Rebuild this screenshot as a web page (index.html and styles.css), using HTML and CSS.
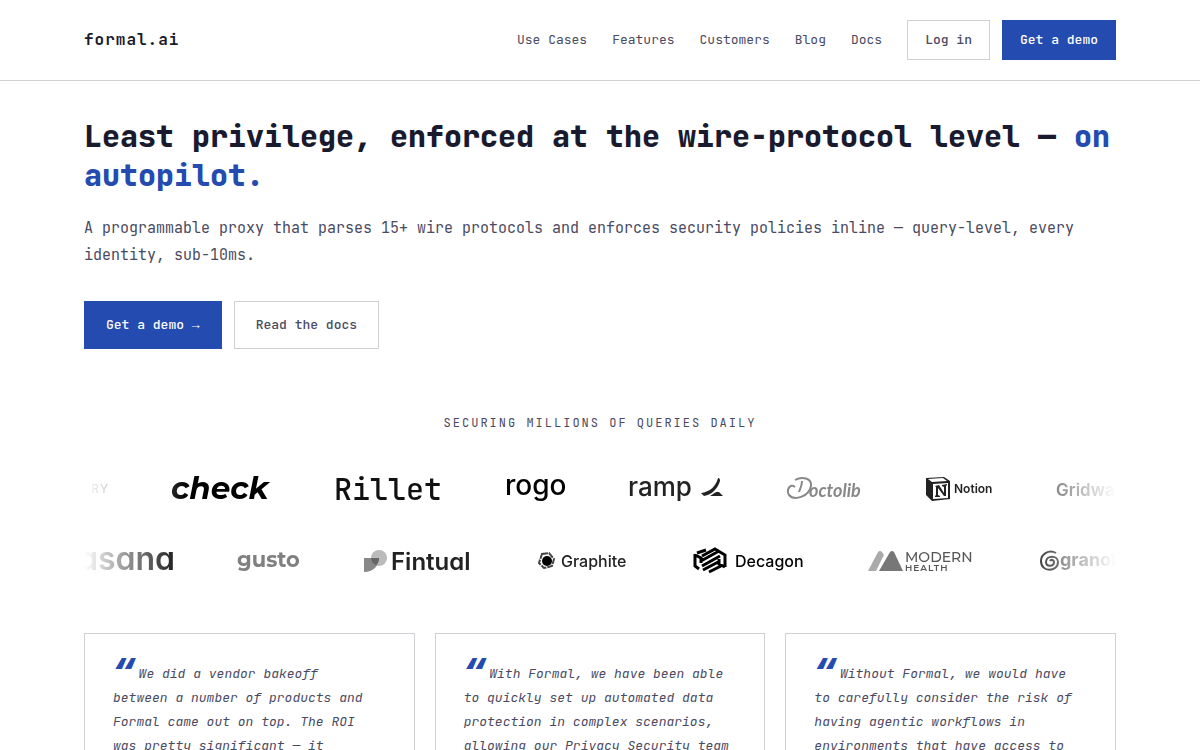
FILE: index.html
```html
<!DOCTYPE html>
<html lang="en">
<head>
<meta charset="utf-8">
<meta name="viewport" content="width=device-width, initial-scale=1">
<title>formal.ai</title>
<link rel="stylesheet" href="styles.css">
</head>
<body>
<header class="site-header">
  <div class="container header-inner">
    <a class="brand" href="#">formal.ai</a>
    <nav class="nav">
      <a href="#">Use Cases</a>
      <a href="#">Features</a>
      <a href="#">Customers</a>
      <a href="#">Blog</a>
      <a href="#">Docs</a>
      <div class="nav-actions">
        <a class="btn" href="#">Log in</a>
        <a class="btn btn-primary" href="#">Get a demo</a>
      </div>
    </nav>
  </div>
</header>
<main class="container">
  <section class="hero">
    <h1>Least privilege, enforced at the wire-protocol level — <span class="accent">on autopilot.</span></h1>
    <p>A programmable proxy that parses 15+ wire protocols and enforces security policies inline — query-level, every identity, sub-10ms.</p>
    <div class="hero-actions">
      <a class="btn btn-large btn-primary" href="#">Get a demo <span class="arrow">→</span></a>
      <a class="btn btn-large" href="#">Read the docs</a>
    </div>
  </section>

  <section class="customers">
    <h2>SECURING MILLIONS OF QUERIES DAILY</h2>
    <div class="logo-row">
      <svg width="24" height="32" fill="#333"><text class="tracked" x="25" y="20" text-anchor="end" font-size="12" font-weight="500">RY</text></svg>
      <svg width="99" height="32"><text class="geo" x="-1" y="26" font-size="31" font-weight="700" font-style="italic">check</text></svg>
      <svg width="107" height="32" fill="#111"><text class="mono" x="-1" y="27" font-size="30" font-weight="500">Rillet</text></svg>
      <svg width="60" height="32"><text x="-1" y="22" font-size="28" font-weight="500">rogo</text></svg>
      <svg width="93" height="32" fill="#222"><text x="-2" y="23" font-size="26" font-weight="500">ramp</text><path d="M88 5c2 0 2 2 2 3-2 7-8 14-16 15l-3-3c9-1 15-7 17-15zM80 23l6-4h3l4 4z"/></svg>
      <svg width="75" height="32" fill="#888"><path d="M8 14C3 10-1 17 2 22c5 6 20 2 22-9C25 5 15 3 8 7" fill="none" stroke="#888" stroke-width="2"/><path d="M15 8c0 5-2 8-3 11" stroke="#888" stroke-width="2" fill="none"/><text class="script" x="22" y="24" font-size="18" font-style="italic" font-weight="700">octolib</text></svg>
      <svg width="67" height="32" fill="#222"><path d="M0 5l18-1 6 4v18l-18 2-6-6z"/><path d="M2 6l15-1 4 3-15 1zM7 11l15-1v15L7 26z" fill="#fff"/><path d="M9 13l4-1 5 8v-6l-2-1v-1l5-1v1l-1 1v10h-2l-6-8v7l2 1v1H9v-1l1-1v-8l-1-1z"/><text x="28" y="20" font-size="12" font-weight="600">Notion</text></svg>
      <svg width="76" height="32" fill="#333"><text x="-1" y="23" font-size="17" font-weight="600">Gridware</text></svg>
    </div>
    <div class="logo-row">
      <svg width="90" height="32" fill="#000"><text class="round" x="91" y="25" text-anchor="end" font-size="32" font-weight="600">asana</text></svg>
      <svg width="62" height="32" fill="#808080"><text class="geo" x="-1" y="22" font-size="21" font-weight="700">gusto</text></svg>
      <svg width="109" height="32" fill="#222"><circle cx="15" cy="13" r="8" fill="#bbb"/><path d="M0 13h15c0 8-6 14-15 14z" fill="#888"/><path d="M7 13h8c0 3-1 5-3 7-3-1-5-4-5-7z" fill="#666"/><text class="round" x="27" y="25" font-size="24" font-weight="600">Fintual</text></svg>
      <svg width="92" height="32" fill="#222"><path d="M5 9l7-1 5 6-2 7-8 2-5-5z" fill="none" stroke="#444" stroke-width="2" stroke-dasharray="6 1"/><circle cx="10" cy="16" r="5" fill="#000"/><text x="24" y="22" font-size="16" font-weight="500">Graphite</text></svg>
      <svg width="111" height="32" fill="none" stroke="#000" stroke-width="3"><path d="M2 9v12l4 3M2 10l6 3v5M32 22V10l-5-3M32 22l-6-3v-5M4 8l9-3M9 11l13-7 5 3M8 16l18-10M9 21l18-10M10 25l17-9M16 27l12-6"/><text x="42" y="22" fill="#000" stroke="none" font-size="16" font-weight="500">Decagon</text></svg>
      <svg width="108" height="32" fill="#555"><path d="M0 26L10 7q2-2 4 0l2 3-8 16z" fill="#aaa"/><path d="M11 26L22 7q2-2 4 0l9 19z" fill="#777"/><text class="geo" x="37" y="17" font-size="14" font-weight="500">MODERN</text><text class="geo tracked" x="37" y="26" font-size="9" font-weight="600">HEALTH</text></svg>
      <svg width="84" height="32" fill="#333"><path d="M16 8C9 4 1 9 1 16c0 12 17 11 17 1 0-7-12-7-12 0 0 5 8 5 8 0 0-2-3-3-4-1" fill="none" stroke="#000" stroke-width="2"/><text x="20" y="21" font-size="18" font-weight="700">granola</text></svg>
    </div>
  </section>

  <section class="quotes">
    <blockquote class="quote"><span class="mark">“</span>We did a vendor bakeoff<br>between a number of products and Formal came out on top. The ROI<br>was pretty significant — it</blockquote>
    <blockquote class="quote"><span class="mark">“</span>With Formal, we have been able to quickly set up automated data protection in complex scenarios, allowing our Privacy Security team</blockquote>
    <blockquote class="quote"><span class="mark">“</span>Without Formal, we would have to carefully consider the risk of having agentic workflows in environments that have access to</blockquote>
  </section>
</main>
</body>
</html>
```
FILE: styles.css
```css
:root {
  --blue: #244bb0;
  --ink: #1a1a2e;
  --text: #4a4a62;
  --line: #d0d0d4;
  --mono: "JetBrains Mono", "DejaVu Sans Mono", "Liberation Mono", monospace;
}
* { box-sizing: border-box; }
html { overflow: hidden; }
body {
  margin: 0;
  background: #fff;
  color: var(--text);
  font-family: var(--mono);
  font-size: 13px;
  line-height: 20px;
}
a { color: inherit; text-decoration: none; }
.container { max-width: 1080px; margin: 0 auto; padding: 0 24px; }

.site-header { border-bottom: 1px solid var(--line); }
.header-inner {
  display: flex;
  align-items: center;
  justify-content: space-between;
  min-height: 80px;
}
.brand { color: var(--ink); font-size: 16px; font-weight: 700; letter-spacing: 1px; }
.nav { display: flex; align-items: center; gap: 25px; }
.nav-actions { display: flex; gap: 12px; }

.btn {
  display: inline-block;
  padding: 9px 17px;
  border: 1px solid var(--line);
  font-weight: 500;
}
.btn-primary { background: var(--blue); border-color: var(--blue); color: #fff; }
.btn-large { padding: 13px 21px; }
.arrow { font-family: "Liberation Mono", monospace; line-height: 1; }

.hero { padding-top: 36px; }
h1 { margin: 0 0 20px; color: var(--ink); font-size: 30px; line-height: 39px; font-weight: 800; }
.accent { color: var(--blue); }
.hero p { margin: 0 0 32px; font-size: 15px; line-height: 27px; }
.hero-actions { display: flex; gap: 12px; }

.customers { padding-top: 64px; }
h2 {
  margin: 0 0 40px;
  font-size: 12px;
  line-height: 20px;
  font-weight: 400;
  letter-spacing: 2px;
  text-align: center;
}
.logo-row {
  display: flex;
  gap: 64px;
  margin-bottom: 40px;
  overflow: hidden;
  font-family: Inter, sans-serif;
  -webkit-mask-image: linear-gradient(to right, transparent, #000 10%, #000 90%, transparent);
  mask-image: linear-gradient(to right, transparent, #000 10%, #000 90%, transparent);
}
.logo-row svg { flex: none; overflow: visible; }
.mono { font-family: var(--mono); }
.geo { font-family: Montserrat, Inter, sans-serif; }
.script { font-family: Lato, sans-serif; }
.tracked { letter-spacing: 1px; }
.round { font-feature-settings: "cv11"; }

.quotes {
  display: grid;
  grid-template-columns: repeat(3, 1fr);
  gap: 20px;
  padding-top: 16px;
}
.quote {
  margin: 0;
  padding: 28px;
  border: 1px solid var(--line);
  font-size: 13px;
  line-height: 24px;
  font-style: italic;
}
.mark {
  margin-right: 4px;
  color: var(--blue);
  font-size: 36px;
  line-height: 0;
  font-weight: 800;
  vertical-align: -8px;
}
```
